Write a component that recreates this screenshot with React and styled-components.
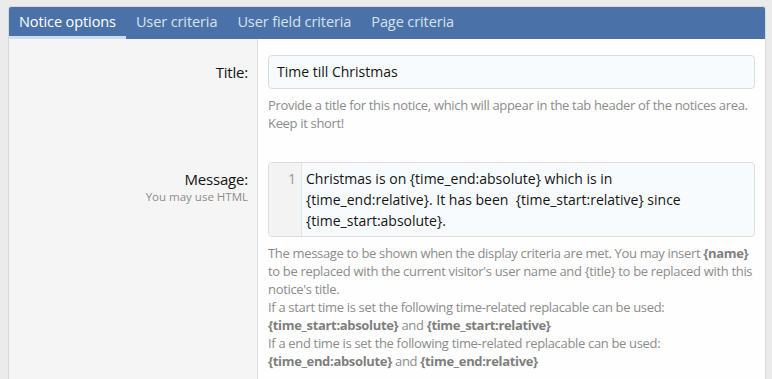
import React from 'react'
import styled, { createGlobalStyle } from 'styled-components'

const GlobalStyle = createGlobalStyle`
  body {
    margin: 0;
    background: #ebebeb;
    font-family: "Open Sans", "Noto Sans", sans-serif;
  }
`

const Page = styled.div`
  box-sizing: border-box;
  min-height: 100vh;
  display: flex;
  flex-direction: column;
  padding: 6px 6px 0 8px;
`

const Block = styled.div`
  flex: 1;
  display: flex;
  flex-direction: column;
  border: 1px solid #d8d8d8;
  border-bottom: none;
  border-radius: 3px 3px 0 0;
  overflow: hidden;
  background: #fefefe;
`

const TabBar = styled.div`
  display: flex;
  background: #4b72a8;
  height: 32px;
`

const Tab = styled.div`
  padding: 0 10px;
  font-size: 14.5px;
  letter-spacing: -0.1px;
  line-height: 30px;
  color: ${p => (p.active ? '#ffffff' : '#d6e2f0')};
  border-bottom: 3px solid ${p => (p.active ? '#d0dcec' : 'transparent')};
`

const FormRow = styled.div`
  display: grid;
  grid-template-columns: 249px 1fr;
  flex: ${p => (p.grow ? 1 : 'none')};
`

const Term = styled.div`
  background: #f5f5f5;
  border-right: 1px solid #e0e0e0;
  padding: ${p => p.pad || '16px'} 9px 15px 10px;
  text-align: right;
`

const Label = styled.div`
  font-size: 15px;
  letter-spacing: -0.2px;
  color: #141414;
  line-height: ${p => p.lh || '20px'};
`

const LabelHint = styled.div`
  font-size: 11.5px;
  color: #8c8c8c;
  line-height: 16px;
`

const Desc = styled.div`
  padding: ${p => p.pad || '16px'} 10px 15px 10px;
`

const Input = styled.div`
  box-sizing: border-box;
  height: 34px;
  border: 1px solid #dcdcdc;
  border-radius: 4px;
  background: #f8fbfe;
  padding: 0 8px;
  font-size: 14px;
  line-height: 32px;
  color: #141414;
`

const Hint = styled.div`
  margin-top: 7px;
  font-size: 13px;
  letter-spacing: -0.33px;
  line-height: 18px;
  color: #8c8c8c;

  b {
    color: #7e7e7e;
    font-weight: 700;
  }
`

const Editor = styled.div`
  display: flex;
  border: 1px solid #dcdcdc;
  border-radius: 4px;
  background: #f8fbfe;
  overflow: hidden;
`

const Gutter = styled.div`
  width: 33px;
  flex: none;
  box-sizing: border-box;
  background: #f3f3f3;
  border-right: 1px solid #e3e3e3;
  padding: 5px 5px 0 0;
  text-align: right;
  font-size: 14px;
  line-height: 21px;
  color: #9a9a9a;
`

const Code = styled.div`
  width: 425px;
  padding: 5px 8px 5px 4px;
  font-size: 14px;
  line-height: 21px;
  color: #141414;
`

const tabs = ['Notice options', 'User criteria', 'User field criteria', 'Page criteria']

export default function App() {
  return (
    <Page>
      <GlobalStyle />
      <Block>
        <TabBar>
          {tabs.map((t, i) => (
            <Tab key={t} active={i === 0}>{t}</Tab>
          ))}
        </TabBar>

        <FormRow>
          <Term>
            <Label lh="34px">Title:</Label>
          </Term>
          <Desc>
            <Input>Time till Christmas</Input>
            <Hint>
              Provide a title for this notice, which will appear in the tab header of the notices area.
              <br />
              Keep it short!
            </Hint>
          </Desc>
        </FormRow>

        <FormRow grow>
          <Term pad="22px">
            <Label>Message:</Label>
            <LabelHint>You may use HTML</LabelHint>
          </Term>
          <Desc pad="15px">
            <Editor>
              <Gutter>1</Gutter>
              <Code>
                Christmas is on {'{time_end:absolute}'} which is in {'{time_end:relative}'}. It has been&nbsp; {'{time_start:relative}'} since {'{time_start:absolute}'}.
              </Code>
            </Editor>
            <Hint>
              The message to be shown when the display criteria are met. You may insert <b>{'{name}'}</b> to be replaced with the current visitor's user name and {'{title}'} to be replaced with this notice's title.
              <br />
              If a start time is set the following time-related replacable can be used:
              <br />
              <b>{'{time_start:absolute}'}</b> and <b>{'{time_start:relative}'}</b>
              <br />
              If a end time is set the following time-related replacable can be used:
              <br />
              <b>{'{time_end:absolute}'}</b> and <b>{'{time_end:relative}'}</b>
            </Hint>
          </Desc>
        </FormRow>
      </Block>
    </Page>
  )
}
